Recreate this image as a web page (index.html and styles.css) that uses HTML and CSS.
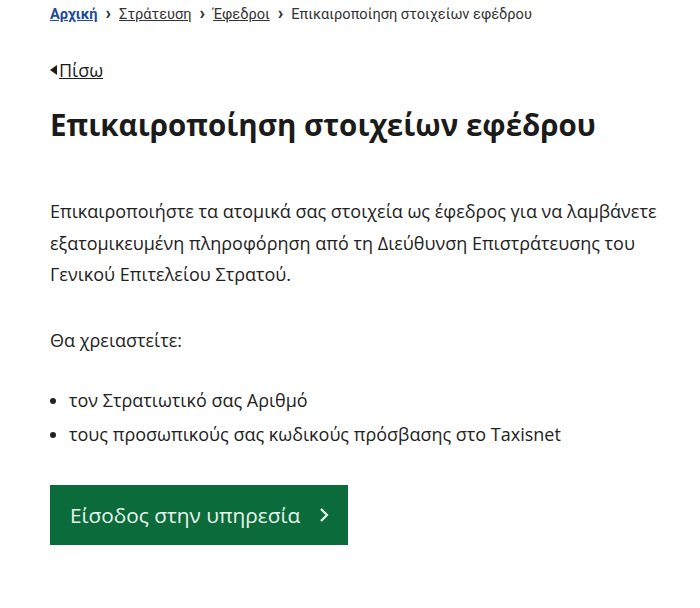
FILE: index.html
```html
<!DOCTYPE html>
<html lang="el">
<head>
    <meta charset="UTF-8">
    <meta name="viewport" content="width=device-width, initial-scale=1.0">
    <title>Επικαιροποίηση στοιχείων εφέδρου</title>
    <link rel="stylesheet" href="styles.css">
</head>
<body>
    <div id="page">
        <nav class="breadcrumbs">
            <a href="#" class="home">Αρχική</a>
            <span class="sep">&rsaquo;</span>
            <a href="#">Στράτευση</a>
            <span class="sep">&rsaquo;</span>
            <a href="#">Έφεδροι</a>
            <span class="sep">&rsaquo;</span>
            <span class="current">Επικαιροποίηση στοιχείων εφέδρου</span>
        </nav>

        <a href="#" class="back"><span class="tri"></span>Πίσω</a>

        <h1>Επικαιροποίηση στοιχείων εφέδρου</h1>

        <p class="intro">Επικαιροποιήστε τα ατομικά σας στοιχεία ως έφεδρος για να λαμβάνετε εξατομικευμένη πληροφόρηση από τη Διεύθυνση Επιστράτευσης του Γενικού Επιτελείου Στρατού.</p>

        <p class="need">Θα χρειαστείτε:</p>

        <ul class="list">
            <li>τον Στρατιωτικό σας Αριθμό</li>
            <li>τους προσωπικούς σας κωδικούς πρόσβασης στο Taxisnet</li>
        </ul>

        <a href="#" class="start">Είσοδος στην υπηρεσία
            <svg width="12" height="16" viewBox="0 0 12 16"><path d="M3 2 L9 8 L3 14" fill="none" stroke="currentColor" stroke-width="2.2"/></svg>
        </a>
    </div>
</body>
</html>
```

FILE: styles.css
```css
body{
    margin: 0;
    background: #ffffff;
    font-family: "Open Sans", sans-serif;
    color: #1b1b1b;
}

#page{
    padding: 4px 20px 0 50px;
}

.breadcrumbs{
    font-family: Roboto, "Open Sans", sans-serif;
    font-size: 14.6px;
    color: #333;
    display: flex;
    align-items: center;
    gap: 8px;
    height: 20px;
}

.breadcrumbs a{
    color: #333;
}

.breadcrumbs a.home{
    color: #1d4a9b;
    font-weight: 700;
}

.sep{
    font-weight: 900;
    font-size: 18px;
    line-height: 1;
    margin-top: -2px;
}

.back{
    display: inline-flex;
    align-items: center;
    margin-top: 34px;
    font-size: 18px;
    color: #1b1b1b;
}

.tri{
    width: 0;
    height: 0;
    border-top: 5px solid transparent;
    border-bottom: 5px solid transparent;
    border-right: 7px solid #1b1b1b;
    margin-right: 2px;
}

h1{
    font-size: 29.5px;
    font-weight: 700;
    margin: 22px 0 0 0;
    color: #1b1b1b;
}

.intro{
    font-size: 18px;
    line-height: 31.5px;
    margin: 51px 0 0 0;
    color: #222;
}

.need{
    font-size: 18px;
    margin: 37px 0 0 0;
    color: #222;
}

.list{
    font-size: 18px;
    margin: 31px 0 0 0;
    padding-left: 19px;
    color: #222;
}

.list li{
    line-height: 34px;
}

.start{
    display: inline-flex;
    align-items: center;
    gap: 18px;
    margin-top: 34px;
    width: 298px;
    height: 60px;
    box-sizing: border-box;
    padding-left: 20px;
    background: #0b6b3a;
    color: #e9f6ee;
    font-size: 20.8px;
    text-decoration: none;
    box-shadow: 0 3px 0 #1b2b22;
}
```
